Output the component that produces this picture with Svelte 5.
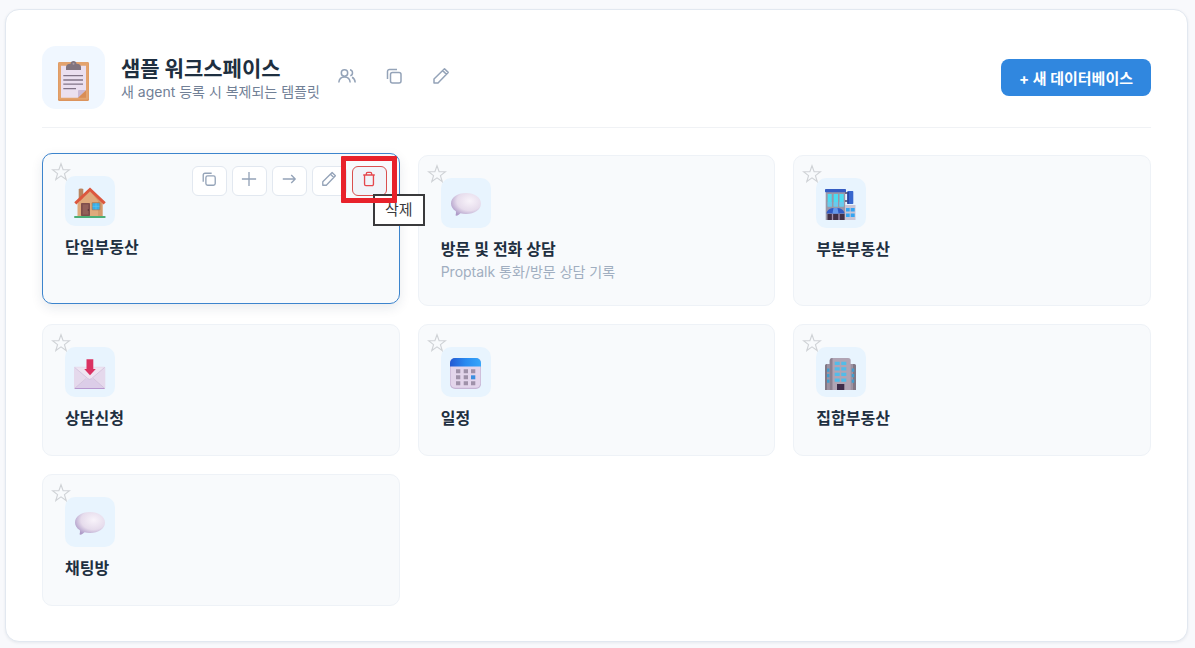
<script>
  const workspace = {
    name: '샘플 워크스페이스',
    description: '새 agent 등록 시 복제되는 템플릿'
  };

  const databases = [
    { id: 1, name: '단일부동산', icon: 'house' },
    { id: 2, name: '방문 및 전화 상담', icon: 'speech', description: 'Proptalk 통화/방문 상담 기록' },
    { id: 3, name: '부분부동산', icon: 'shop' },
    { id: 4, name: '상담신청', icon: 'inbox' },
    { id: 5, name: '일정', icon: 'calendar' },
    { id: 6, name: '집합부동산', icon: 'building' },
    { id: 7, name: '채팅방', icon: 'speech' }
  ];

  const actions = [
    { icon: 'copy', label: '복제' },
    { icon: 'plus', label: '추가' },
    { icon: 'arrow', label: '이동' },
    { icon: 'pencil', label: '수정' },
    { icon: 'trash', label: '삭제' }
  ];

  let selected = $state(1);
</script>

{#snippet lineIcon(name)}
  <svg class="line-icon" viewBox="0 0 18 18" aria-hidden="true">
    {#if name === 'users'}
      <circle cx="6.5" cy="6" r="3.2" />
      <path d="M.8 15.5c.3-3.600 2.500-5.500 5.700-5.500s5.400 1.900 5.700 5.500M12 2.800c3.300.5 3.300 5.200.3 6M14 10.300c2 .8 3 2.500 3.200 5.200" />
    {:else if name === 'copy'}
      <rect x="5.500" y="5.500" width="10.500" height="10.500" rx="2" />
      <path d="M2.500 12V4.500a2 2 0 0 1 2-2H12" />
    {:else if name === 'plus'}
      <path d="M9 1v16M1 9h16" />
    {:else if name === 'arrow'}
      <path d="M2 9h14M11.500 4.500 16 9l-4.500 4.500" />
    {:else if name === 'pencil'}
      <path d="M2 16v-4L12.500 1.700l3.700 3.700L6 16zM10.700 3.600l3.700 3.700" />
    {:else if name === 'trash'}
      <path d="M2.500 4.500h13M6 4.500V3a1.500 1.500 0 0 1 1.500-1.500h3A1.500 1.500 0 0 1 12 3v1.500M4 4.500V15a1.500 1.500 0 0 0 1.500 1.500h7A1.500 1.500 0 0 0 14 15V4.500" />
    {/if}
  </svg>
{/snippet}

{#snippet picture(name)}
  <svg class="picture" viewBox="0 0 32 32" aria-hidden="true">
    {#if name === 'house'}
      <path d="M4.700 2.500Q4.700 1.500 7 1.500t2.300 1V14H4.700z" fill="#b98560" />
      <path d="M16 4 28.500 16v13.500h-25V16z" fill="#dfaa7c" />
      <path d="M16 4 28.500 16v13.500H24V14z" fill="#d39a6c" />
      <path d="M1.300 16.300 16 2.500l14.700 13.800" fill="none" stroke="#dc573e" stroke-width="3" />
      <rect x="7" y="16" width="9" height="13" rx=".7" fill="#7f4e4c" />
      <path d="M8.700 17.500h5.600v10H8.700z" fill="#925f59" />
      <circle cx="14.300" cy="23" r=".7" fill="#4d2b31" />
      <rect x="17.700" y="15.300" width="8.700" height="8" rx="1" fill="#b17d57" />
      <rect x="18.500" y="16.200" width="7" height="6.300" fill="#38aee8" />
      <path d="M22 16.200v6.300M18.500 19.300h7" stroke="#5bc5f4" stroke-width=".7" />
      <rect x="0" y="29" width="31.700" height="2" rx="1" fill="#4cae76" />
    {:else if name === 'speech'}
      <defs>
        <radialGradient id="bubble" cx=".62" cy=".35" r=".7">
          <stop offset="0" stop-color="#f8f3fa" />
          <stop offset=".6" stop-color="#e6dcec" />
          <stop offset="1" stop-color="#ae9bc8" />
        </radialGradient>
      </defs>
      <path d="M16 4c8.500 0 15 4.600 15 10.500S24.500 25 16 25c-2 0-3.800-.2-5.500-.7-1 1-2.600 2.300-4.300 2.500-.5 0-.7-.4-.6-.8.400-1.200.5-2.300.3-3.800C2.800 20.300 1 17.600 1 14.500 1 8.600 7.500 4 16 4z" fill="url(#bubble)" />
    {:else if name === 'shop'}
      <rect x=".7" y="1.500" width="19.500" height="29.500" fill="#9a97a8" />
      <rect x="0" y="0" width="21" height="3.300" rx=".7" fill="#355dc3" />
      <path d="M2.700 5h4v12.500h-4zM8.700 5H13v12.500H8.700zM14.500 5h4.200v12.500h-4.200z" fill="#4cdcf2" />
      <path d="M2.700 13h4v4.500h-4zM8.700 13H13v4.500H8.700zM14.500 13h4.200v4.500h-4.200z" fill="#6bc9ed" />
      <rect x="20" y="16" width="10.500" height="15" fill="#c9c5d6" />
      <path d="M21 19h3.700v3.500H21zM25.700 19h4v3.500h-4zM21 24.500h3.700V28H21zM25.700 24.500h4V28h-4z" fill="#35a5f2" />
      <path d="M20 4h3M20 12h3" stroke="#4a4565" stroke-width="1.300" />
      <rect x="22.300" y="2" width="6" height="13" rx=".7" fill="#3766ce" />
      <path d="M22.300 3v12h1.500V3z" fill="#283f94" />
      <path d="M2.500 25h17v6h-17z" fill="#413047" />
      <path d="M7.500 25v6M14 25v6" stroke="#a491b1" stroke-width="1.300" />
      <path d="M1.500 24.500c.5-3.500 3-5.500 9-5.500s8.500 2 9 5.500z" fill="#315bc5" />
      <path d="M8.500 19.100 7.500 24.500h6l-1-5.400z" fill="#6598ec" />
    {:else if name === 'inbox'}
      <rect x="0" y="8.700" width="31.300" height="22.300" rx="1.300" fill="#e5d9ec" />
      <path d="M.5 30.500 13 20.500h5.500L31 30.500z" fill="#dccde8" />
      <path d="m.6 9.400 13.300 11.200q1.800 1.500 3.600 0L30.700 9.400z" fill="#eee4f1" />
      <path d="m.6 9.400 13.300 11.200q1.800 1.500 3.600 0L30.700 9.400M.8 30.300l11.500-10M30.600 30.300l-11.500-10" fill="none" stroke="#cdbcd9" stroke-width=".7" />
      <path d="M.8 30.500h29.700" stroke="#b797cf" />
      <path d="M12.500 1.300h6.800V11h2.500L16 17.200 10.200 11h2.300z" fill="#da3262" />
    {:else if name === 'calendar'}
      <defs>
        <linearGradient id="cal-head" x1="0" x2="1">
          <stop offset="0" stop-color="#2459d2" />
          <stop offset=".5" stop-color="#298af0" />
          <stop offset="1" stop-color="#36a7fb" />
        </linearGradient>
      </defs>
      <rect x="0" y="0" width="31" height="31" rx="5" fill="#c6b5d5" />
      <rect x=".7" y="1" width="29.600" height="28.800" rx="4.500" fill="#e3d5eb" />
      <path d="M0 8.500V5a5 5 0 0 1 5-5h21a5 5 0 0 1 5 5v3.500z" fill="url(#cal-head)" />
      <path d="M6 11.300h4.300v4H6zM13.700 11.300H18v4h-4.300zM21 11.300h4.300v4H21zM6 17.300h4.300v4H6zM13.700 17.300H18v4h-4.300zM6 23.300h4.300v4H6zM13.700 23.300H18v4h-4.300zM21 23.300h4.300v4H21z" fill="#9f91a9" />
      <path d="M21 17.300h4.300v4H21z" fill="#3b8edf" />
    {:else if name === 'building'}
      <path d="M0 7.500Q0 6 1.500 6H6v26H0zM25 6h4.500Q31 6 31 7.500V32h-6z" fill="#817886" />
      <path d="M2 6h4v26H2zM25 6h3v26h-3z" fill="#9c92a2" />
      <path d="M4.700 2.500Q4.700 0 7.200 0h16q2.500 0 2.500 2.500V32h-21z" fill="#b0a4b4" />
      <path d="M4.700 3Q4.700 0 7.500 0v32H4.700z" fill="#8b8090" />
      <path d="M9.700 3.700h5V7h-5zM16.300 3.700h5V7h-5zM9.700 9.300h5v3.300h-5zM16.300 9.300h5v3.300h-5zM9.700 14.800h5v3.300h-5zM16.300 14.800h5v3.300h-5zM9.700 20.400h5v3.300h-5zM16.300 20.400h5v3.300h-5z" fill="#52bce9" />
      <path d="M2 10.500h2.500v3.200H2zM2 16h2.500v3.200H2zM2 21.500h2.500v3.200H2zM26.700 10.500h2.500v3.200h-2.500zM26.700 16h2.500v3.200h-2.500zM26.700 21.500h2.500v3.200h-2.500z" fill="#429dce" />
      <rect x="12" y="26" width="7.300" height="6" fill="#3d2c4a" />
    {/if}
  </svg>
{/snippet}

<main class="panel">
  <header>
    <div class="workspace-icon">
      <svg viewBox="0 0 31 41" aria-hidden="true">
        <rect x="0" y="2" width="31" height="39" rx="1.500" fill="#dc945d" />
        <rect x=".5" y="2" width="30" height="37.500" rx="1.300" fill="#e3a36e" />
        <path d="M3 5.700h25v24.500l-8 7.500H3z" fill="#ebe0f0" />
        <path d="M28 30v7.700h-8.300z" fill="#d98d56" />
        <path d="M20 37.700V31q0-1 1-1h7z" fill="#cbbad6" />
        <path d="M5.300 15.700H25M5.300 20H25M5.300 24.200H25M5.300 28.700H18" stroke="#817487" stroke-width="1.300" />
        <path d="M8 10V7q0-3 4.500-3.300Q12.800 1 15.500 1t3 2.700Q23 4 23 7v3z" fill="#81747e" />
        <circle cx="15.500" cy="3.700" r="1" fill="#a99ba5" />
      </svg>
    </div>
    <div class="workspace-text">
      <h1>{workspace.name}</h1>
      <p>{workspace.description}</p>
    </div>
    <div class="workspace-tools">
      <button aria-label="멤버">{@render lineIcon('users')}</button>
      <button aria-label="복제">{@render lineIcon('copy')}</button>
      <button aria-label="수정">{@render lineIcon('pencil')}</button>
    </div>
    <button class="create">+ 새 데이터베이스</button>
  </header>

  <div class="grid">
    {#each databases as db (db.id)}
      <article class="card" class:selected={selected === db.id}>
        <button class="star" aria-label="즐겨찾기">
          <svg viewBox="0 0 18 17" aria-hidden="true">
            <path d="m9 1.500 1.900 5.400h5.700l-4.500 3.500 1.600 5.300L9 12.400l-4.700 3.300 1.600-5.300-4.500-3.500h5.700z" />
          </svg>
        </button>
        <div class="card-icon">{@render picture(db.icon)}</div>
        <h2>{db.name}</h2>
        {#if db.description}
          <p>{db.description}</p>
        {/if}

        {#if selected === db.id}
          <div class="actions">
            {#each actions as action}
              <button class:danger={action.icon === 'trash'} aria-label={action.label}>
                {@render lineIcon(action.icon)}
              </button>
            {/each}
            <div class="tooltip" role="tooltip">삭제</div>
            <div class="highlight"></div>
          </div>
        {/if}
      </article>
    {/each}
  </div>
</main>

<style>
  :global(body) {
    background: #f8f9fc;
    font-family: Inter, "Noto Sans CJK KR", sans-serif;
    color: #1e2f40;
  }

  .panel {
    margin: 9px 7px 5px 5px;
    padding: 36px 36px 35px;
    background: #fff;
    border: 1px solid #e2e8f0;
    border-radius: 14px;
    box-shadow: 0 1px 3px rgba(30, 50, 80, 0.08);
  }

  h1,
  h2,
  p {
    margin: 0;
  }

  button {
    display: flex;
    align-items: center;
    justify-content: center;
    padding: 0;
    border: none;
    background: transparent;
    font-family: inherit;
    color: #94a3b8;
    cursor: pointer;
  }

  header {
    display: flex;
    align-items: center;
    padding-bottom: 18px;
    border-bottom: 1px solid #f0f2f5;
  }

  .workspace-icon {
    box-sizing: border-box;
    display: flex;
    justify-content: center;
    width: 63px;
    height: 63px;
    padding-top: 14px;
    margin-right: 16px;
    background: #f0f7ff;
    border-radius: 14px;
  }

  .workspace-icon svg {
    width: 31px;
    height: 41px;
  }

  h1 {
    font-size: 21px;
    line-height: 28px;
    font-weight: 700;
  }

  .workspace-text p {
    font-size: 14px;
    line-height: 18px;
    color: #718096;
  }

  .workspace-tools {
    display: flex;
    gap: 8px;
    padding-bottom: 4px;
    margin-left: 8px;
  }

  .workspace-tools button {
    width: 39px;
    height: 36px;
  }

  .line-icon {
    width: 18px;
    height: 18px;
    fill: none;
    stroke: currentColor;
    stroke-width: 1.5;
    stroke-linejoin: round;
  }

  .create {
    height: 37px;
    padding: 0 18px;
    margin-left: auto;
    border-radius: 8px;
    background: #3087df;
    color: #fff;
    font-size: 15px;
    font-weight: 700;
  }

  .grid {
    display: grid;
    grid-template-columns: repeat(3, 1fr);
    gap: 18px;
    margin-top: 27px;
  }

  .card {
    position: relative;
    box-sizing: border-box;
    min-height: 132px;
    padding: 22px 22px 23px;
    background: #f8fafc;
    border: 1px solid #eef2f7;
    border-radius: 10px;
  }

  .card.selected {
    transform: translateY(-2px);
    border-color: #3c84cd;
    box-shadow: 0 4px 12px rgba(30, 50, 80, 0.1);
    z-index: 1;
  }

  .card-icon {
    box-sizing: border-box;
    display: flex;
    justify-content: center;
    width: 50px;
    height: 50px;
    padding-top: 11px;
    background: #e8f4fe;
    border-radius: 10px;
  }

  .picture {
    width: 32px;
    height: 32px;
  }

  h2 {
    margin-top: 9px;
    font-size: 16px;
    line-height: 24px;
    font-weight: 600;
  }

  .card p {
    font-size: 14px;
    line-height: 21px;
    color: #a0aec0;
  }

  .star {
    position: absolute;
    top: 8px;
    left: 8px;
  }

  .star svg {
    width: 20px;
    height: 19px;
    fill: none;
    stroke: #cfd2d6;
    stroke-width: 1;
  }

  .actions {
    position: absolute;
    top: 12px;
    right: 12px;
    display: flex;
    gap: 5px;
  }

  .actions button {
    box-sizing: border-box;
    width: 35px;
    height: 30px;
    padding-bottom: 4px;
    background: #fff;
    border: 1px solid #e2e8f0;
    border-radius: 6px;
  }

  .actions .line-icon {
    width: 16px;
    height: 16px;
  }

  .actions .danger {
    background: #f1f4f9;
    border-color: #d9504f;
    color: #e5484d;
  }

  .tooltip {
    position: absolute;
    top: 28px;
    right: -38px;
    padding: 4px 10px;
    background: #fff;
    border: 2px solid #3a3a3c;
    color: #3a3a3c;
    font-size: 15px;
    line-height: 20px;
    white-space: nowrap;
  }

  .highlight {
    position: absolute;
    top: -10px;
    right: -10px;
    width: 46px;
    height: 37px;
    border: 5px solid #e8222b;
    border-radius: 1px;
    pointer-events: none;
  }
</style>
